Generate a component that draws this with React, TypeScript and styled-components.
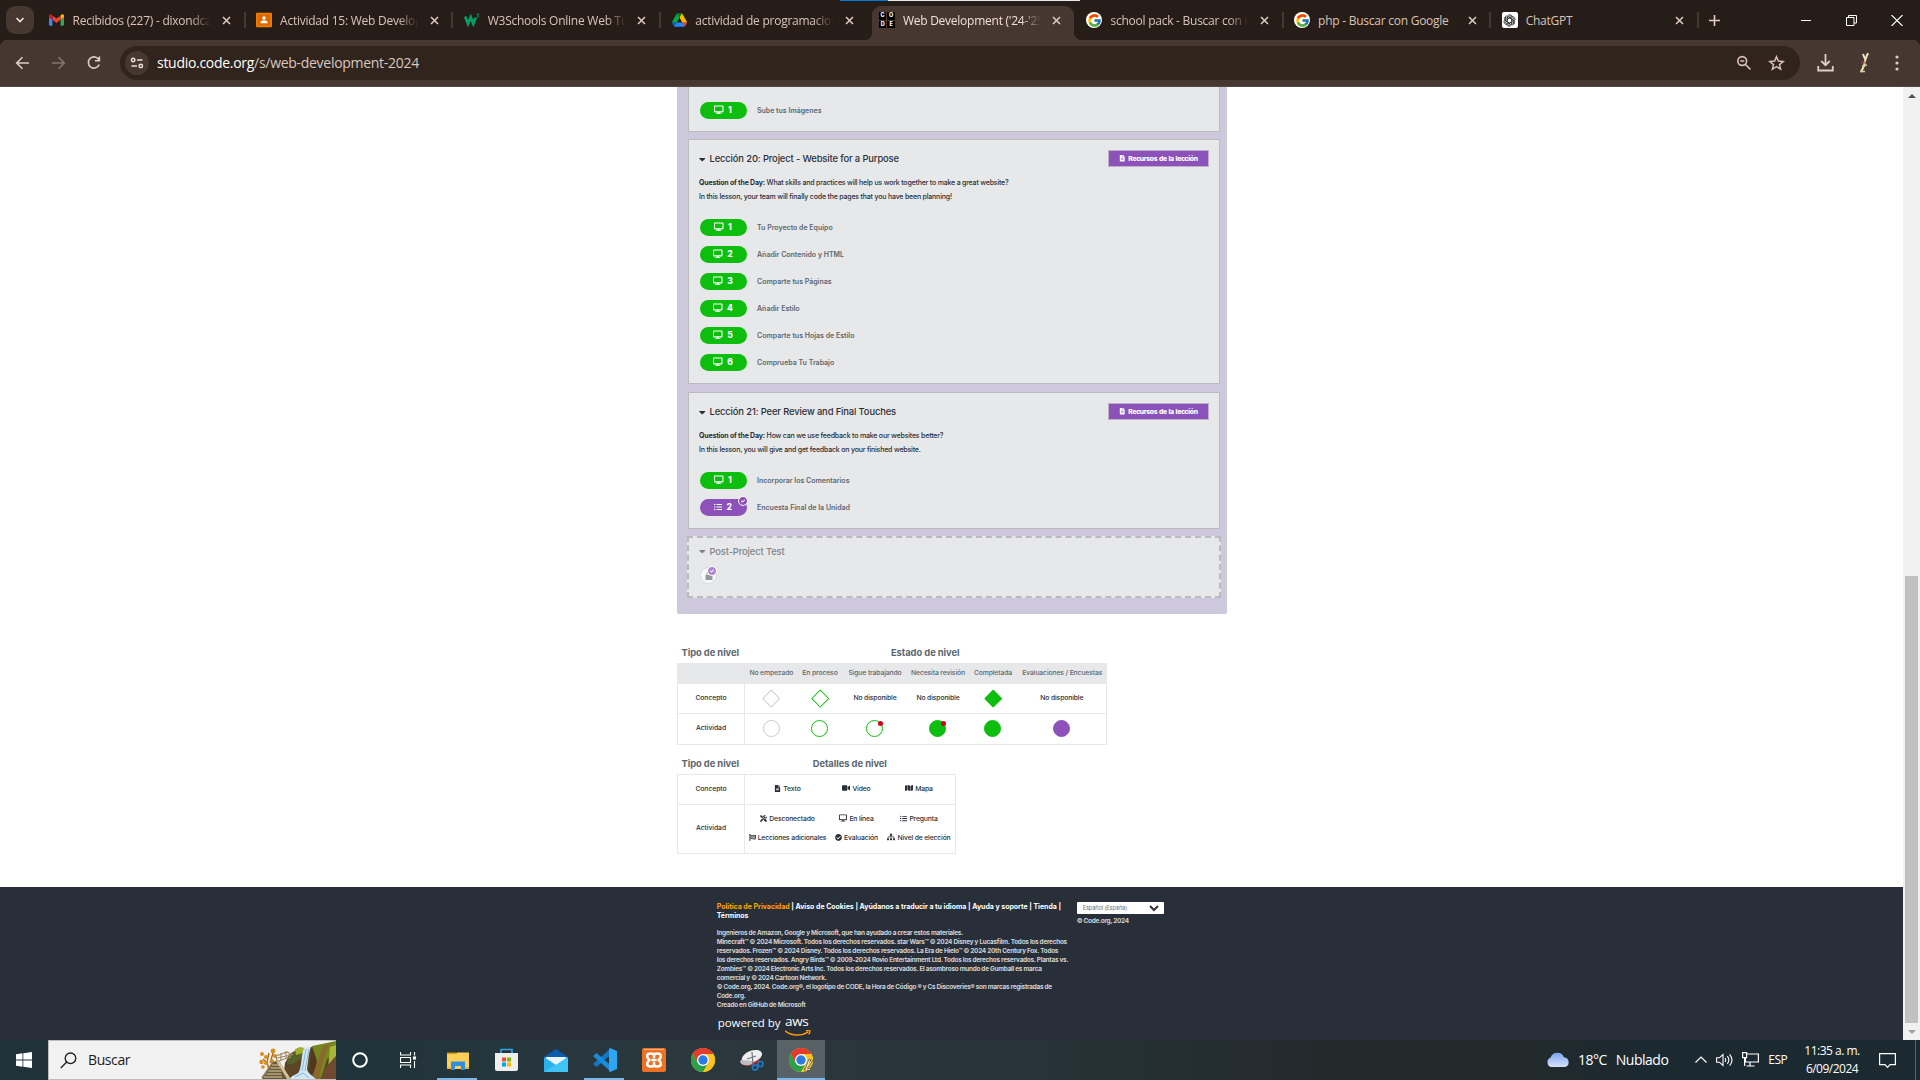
import React, { ReactNode } from 'react';
import styled, { createGlobalStyle } from 'styled-components';
import {
  FaDesktop, FaListUl, FaFileAlt, FaVideo, FaMap, FaCheckCircle, FaSitemap,
  FaFlagCheckered, FaTools, FaCaretDown, FaCheck,
} from 'react-icons/fa';
import { FcGoogle } from 'react-icons/fc';

const system = "'Open Sans', 'Noto Sans', sans-serif";
const brand = "Inter, 'Noto Sans', sans-serif";
const green = '#0ebe0e';
const purple = '#8c52ba';
const line = '#e7e8ea';

const GlobalStyle = createGlobalStyle`
  * { box-sizing: border-box; }
  html, body { margin: 0; padding: 0; overflow: hidden; }
  svg { display: block; flex: none; }
`;

const Screen = styled.div`
  width: 1920px; height: 1080px; display: flex; flex-direction: column;
  overflow: hidden; background: #fff; font-family: ${system};
`;

/* ---------- browser chrome ---------- */

const TabStrip = styled.header`
  position: relative; height: 40px; flex: none; background: #271d18;
  display: flex; align-items: flex-start; padding-left: 6px;
`;
const LoadStripe = styled.div`
  position: absolute; top: 0; left: 840px; width: 240px; height: 1px;
  background: linear-gradient(90deg, #0078d7 48px, #e8e8e8 48px);
`;
const TabSearch = styled.div`
  width: 28px; height: 28px; margin: 6px 7px 0 0; border-radius: 9px; background: #463831;
  display: flex; align-items: center; justify-content: center;
`;
const Tab = styled.div<{ $active?: boolean; $divider?: boolean }>`
  position: relative; width: 207.6px; flex: none; height: 40px; padding: 0 14px 0 7.5px;
  display: flex; align-items: center; color: ${(p) => (p.$active ? '#f1e0d9' : '#d9c3b9')};
  &::after {
    content: ''; position: absolute; right: 3px; top: 12px; width: 2px; height: 16px;
    background: ${(p) => (p.$divider ? '#463831' : 'transparent')};
  }
`;
const ActiveShape = styled.div`
  position: absolute; left: 0.5px; top: 6px; width: 202px; height: 34px;
  background: #463831; border-radius: 9px 9px 0 0;
  &::before, &::after {
    content: ''; position: absolute; bottom: 0; width: 8px; height: 8px;
  }
  &::before { left: -8px; background: radial-gradient(circle at 0 0, transparent 8px, #463831 8.5px); }
  &::after { right: -8px; background: radial-gradient(circle at 100% 0, transparent 8px, #463831 8.5px); }
`;
const Favicon = styled.div`
  position: relative; width: 16px; height: 16px; flex: none;
  display: flex; align-items: center; justify-content: center;
`;
const TabTitle = styled.div<{ $fade: boolean }>`
  position: relative; width: 138px; flex: none; margin-left: 8px; white-space: nowrap;
  font-size: 12px; line-height: 18px; letter-spacing: -0.25px; padding-top: 1px;
  mask-image: ${(p) => (p.$fade ? 'linear-gradient(90deg, #000 118px, transparent 138px)' : 'none')};
`;
const TabClose = styled.div`
  position: relative; width: 16px; height: 16px; margin-left: 8px;
  display: flex; align-items: center; justify-content: center;
`;
const NewTab = styled.div`
  width: 24px; height: 40px; margin-left: 1px; display: flex; align-items: center; justify-content: center;
`;
const WindowButtons = styled.div`
  margin-left: auto; height: 40px; display: flex; align-items: center; gap: 34px; padding-right: 17px;
`;
const Toolbar = styled.div`
  height: 47px; flex: none; display: flex; align-items: center; padding: 0 15px 1px 15px;
  border-bottom: 1px solid #514744;
  background: radial-gradient(circle at 8px 8px, #463831 8px, #271d18 8.5px) 0 0 / 8px 8px no-repeat,
    radial-gradient(circle at 0 8px, #463831 8px, #271d18 8.5px) 100% 0 / 8px 8px no-repeat, #463831;
`;
const NavButtons = styled.div`
  display: flex; align-items: center; gap: 20.5px; width: 105px;
`;
const Omnibox = styled.div`
  width: 1680px; flex: none; height: 34px; border-radius: 17px; background: #30241d; padding: 0 15px 0 5px;
  display: flex; align-items: center;
`;
const SiteInfo = styled.div`
  width: 24px; height: 24px; border-radius: 12px; background: #463831;
  display: flex; align-items: center; justify-content: center;
`;
const Url = styled.div`
  margin-left: 8px; font-size: 14px; line-height: 20px; letter-spacing: -0.29px; color: #d9c8c0;
  b { font-weight: 400; color: #fff; }
`;
const OmniActions = styled.div`
  margin-left: auto; display: flex; align-items: center; gap: 16px;
`;
const ToolbarEnd = styled.div`
  margin-left: 17px; display: flex; align-items: center; gap: 20px;
  svg:last-child { margin-left: 3px; }
`;

/* ---------- page ---------- */

const Viewport = styled.div`
  height: 953px; flex: none; display: flex; overflow: hidden;
`;
const Page = styled.main`
  width: 1903px; background: #fff; display: flex; flex-direction: column; font-family: ${brand};
`;
const Unit = styled.section`
  width: 550px; height: 527px; flex: none; margin-left: 677px; padding: 0 7px 0 11px;
  background: #cec8dc; border-radius: 0 0 2px 2px; display: flex; flex-direction: column;
`;
const Card = styled.article<{ $height: number; $cut?: boolean }>`
  height: ${(p) => p.$height}px; flex: none; margin-bottom: 7px; padding: ${(p) => (p.$cut ? '15px' : '10px')} 10px 0 10px;
  background: #e7e8ea; border: 1px solid #bbbabc; ${(p) => (p.$cut ? 'border-top: 0;' : '')}
`;
const Spacer = styled.div`height: 1px; flex: none;`;
const HiddenCard = styled.article`
  height: 62px; margin: 0 -1px; padding: 5px 10px; background: #e7e8ea; border: 2px dashed #bbbabc;
`;
const CardHead = styled.div`
  height: 17px; display: flex; align-items: center; justify-content: space-between;
`;
const Title = styled.h3<{ $muted?: boolean }>`
  margin: 0; display: flex; align-items: center; gap: 4px; white-space: nowrap;
  font-size: 9.4px; font-weight: ${(p) => (p.$muted ? 500 : 550)}; letter-spacing: -0.13px;
  color: ${(p) => (p.$muted ? '#808488' : '#292f36')}; line-height: 17px; padding-top: ${(p) => (p.$muted ? 0 : 0.5)}px;
`;
const Caret = styled(FaCaretDown)`width: 6.5px; height: 10.500px;`;
const Resources = styled.div`
  width: 101px; height: 17px; background: ${purple}; border: 1px solid #bbb2c8;
  display: flex; align-items: center; justify-content: center; gap: 2.500px;
  color: #fff; font-size: 6.800px; font-weight: 800; letter-spacing: -0.36px; word-spacing: 0.7px; white-space: nowrap;
`;
const Copy = styled.div`
  margin-top: 9px; margin-bottom: 15px; font-size: 7px; font-weight: 450; line-height: 14px;
  letter-spacing: -0.19px; color: #292f36; white-space: nowrap;
  b { font-weight: 650; }
`;
const Levels = styled.div`
  display: flex; flex-direction: column; gap: 10px; padding-left: 1px;
`;
const Level = styled.div`
  height: 17px; display: flex; align-items: center; gap: 10px;
  font-size: 7px; font-weight: 600; color: #5b6770; letter-spacing: 0; line-height: 15px;
`;
const Pill = styled.div<{ $purple?: boolean }>`
  position: relative; width: 47px; height: 17px; border-radius: 9px; background: ${(p) => (p.$purple ? purple : green)};
  color: #fff; display: flex; align-items: center; justify-content: center; gap: 4.500px; padding: 0 1px 1px 0;
  font-size: 8.500px; font-weight: 800; line-height: 14px;
`;
const LevelNumber = styled.span`padding-bottom: 1px;`;
const LevelName = styled.span`padding-bottom: 1px; white-space: nowrap;`;
const CheckBadge = styled.div<{ $faded?: boolean }>`
  position: absolute; right: -1px; top: ${(p) => (p.$faded ? -2 : -3)}px; width: 10px; height: 10px; border-radius: 5px;
  border: 1px solid #fff; background: ${(p) => (p.$faded ? '#ae86d0' : purple)}; color: #fff;
  display: flex; align-items: center; justify-content: center;
`;
const LockBubble = styled.div`
  position: relative; width: 17px; height: 17px; margin: 7px 0 0 1px; border-radius: 50%;
  border: 1px solid #d8dadc; background: #f8f8f8;
  display: flex; align-items: center; justify-content: center;
`;

/* ---------- legend ---------- */

const Legend = styled.section<{ $columns: string; $top: number }>`
  margin: ${(p) => p.$top}px 0 0 677px; display: grid; grid-template-columns: ${(p) => p.$columns};
  align-self: flex-start; flex: none;
`;
const LegendTitle = styled.div<{ $span?: number }>`
  grid-column: span ${(p) => p.$span ?? 1}; height: 20px; padding: 0 1.500px 1px 0;
  display: flex; align-items: center; justify-content: center;
  font-size: 9.400px; font-weight: 650; letter-spacing: -0.06px; color: #5b6770; white-space: nowrap;
`;
const HeadCell = styled.div`
  height: 21px; background: #e7e8ea; color: #5b6770; display: flex; align-items: center; justify-content: center;
  font-size: 6.800px; font-weight: 450; letter-spacing: -0.12px; white-space: nowrap; padding-bottom: 2px;
`;
const Cell = styled.div<{ $height: number; $label?: boolean; $last?: boolean }>`
  height: ${(p) => p.$height}px; display: flex; align-items: center; justify-content: center;
  padding-bottom: ${(p) => (p.$height > 30 ? 2 : 0)}px;
  border-bottom: 1px solid ${line}; white-space: nowrap;
  border-left: ${(p) => (p.$label ? `1px solid ${line}` : '0')};
  border-right: ${(p) => (p.$label || p.$last ? `1px solid ${line}` : '0')};
  font-size: 6.800px; font-weight: ${(p) => (p.$label ? 550 : 450)};
  letter-spacing: ${(p) => (p.$label ? '-0.05px' : '-0.12px')}; color: #292f36;
`;
const CellText = styled.span`padding-bottom: 2px;`;
const Diamond = styled.i<{ $border: string; $fill?: string }>`
  width: 12.500px; height: 12.500px; transform: rotate(45deg); border-radius: 1px;
  border: 1px solid ${(p) => p.$border}; background: ${(p) => p.$fill ?? '#fff'};
`;
const Circle = styled.i<{ $border: string; $fill?: string; $flag?: boolean }>`
  position: relative; width: 17px; height: 17px; border-radius: 50%;
  border: 1px solid ${(p) => p.$border}; background: ${(p) => p.$fill ?? '#fff'};
  &::after {
    content: ''; position: absolute; right: -1px; top: 0; width: 5px; height: 5px; border-radius: 50%;
    background: ${(p) => (p.$flag ? '#d0021b' : 'transparent')};
  }
`;
const TopRule = styled.div`grid-column: 1 / -1; height: 1px; background: ${line};`;
const DetailGrid = styled.div<{ $height: number }>`
  height: ${(p) => p.$height}px; display: grid; grid-template-columns: 77px 43px 64px; column-gap: 9px;
  row-gap: 7px; align-content: center; justify-content: center; padding-bottom: 3px;
  border-right: 1px solid ${line}; border-bottom: 1px solid ${line};
`;
const Detail = styled.div`
  height: 12px; display: flex; align-items: center; justify-content: center; gap: 2px; white-space: nowrap;
  font-size: 6.800px; font-weight: 450; letter-spacing: -0.15px; color: #292f36;
`;

/* ---------- page footer ---------- */

const Footer = styled.footer`
  height: 153px; margin-top: auto; flex: none; background: #282f38; padding: 15px 0 0 716.700px; display: flex;
`;
const FooterMain = styled.div`width: 360px;`;
const Links = styled.div`
  color: #fff; font-size: 7px; font-weight: 700; line-height: 9px; letter-spacing: -0.03px; white-space: nowrap;
  em { font-style: normal; color: #ffa400; }
`;
const Credits = styled.div`
  margin-top: 9px; color: #d0d3d6; font-size: 6.400px; font-weight: 650; line-height: 9px; letter-spacing: -0.255px;
  white-space: nowrap;
`;
const Powered = styled.div`
  margin-top: 5px; height: 24px; display: flex; align-items: flex-start; gap: 4.500px; padding-left: 1px;
  color: #fff; font: 500 11.500px/16px ${system}; letter-spacing: -0.05px;
`;
const Aws = styled.div`
  font: 400 13.500px/13px ${system}; letter-spacing: -0.3px; color: #fff;
  svg { margin-top: 2px; }
`;
const Locale = styled.div`
  display: flex; flex-direction: column; gap: 3px; color: #d0d3d6;
  font-size: 6.500px; font-weight: 650; line-height: 9px; letter-spacing: -0.33px;
`;
const Select = styled.div`
  width: 87px; height: 12px; background: #fff; border-radius: 1px; padding: 0 5px 0 6px; color: #6b7177;
  display: flex; align-items: center; justify-content: space-between; font-size: 5.600px; font-weight: 400; letter-spacing: -0.1px;
`;

/* ---------- scrollbar ---------- */

const Scrollbar = styled.div`
  width: 17px; background: #f1f1f1; display: flex; flex-direction: column; align-items: center;
`;
const Arrow = styled.div<{ $down?: boolean }>`
  height: 17px; width: 17px; display: flex; align-items: center; justify-content: center;
  &::before {
    content: ''; border: 4px solid transparent; border-top-width: ${(p) => (p.$down ? 4 : 0)}px;
    border-bottom-width: ${(p) => (p.$down ? 0 : 4)}px;
    border-top-color: ${(p) => (p.$down ? '#a3a3a3' : 'transparent')};
    border-bottom-color: ${(p) => (p.$down ? 'transparent' : '#505050')};
  }
`;
const Thumb = styled.div`margin-top: auto; width: 13px; height: 447px; background: #c1c1c1;`;

/* ---------- taskbar ---------- */

const Taskbar = styled.footer`
  height: 40px; flex: none; display: flex; align-items: stretch; color: #fff;
  background: linear-gradient(90deg, #20313a 0, #22343b 400px, #2b393e 700px, #263439 1000px, #23292b 1350px, #232a2c 1520px, #1b2930 1640px, #1b2a31 100%);
`;
const Start = styled.div`width: 48px; display: flex; align-items: center; justify-content: center;`;
const SearchBox = styled.div`
  width: 288px; background: #f2f2f2; border: 1px solid #bcbcbc; border-right: 0; display: flex; align-items: center;
  padding-left: 11px; color: #1d1d1d; font-size: 14px; letter-spacing: -0.4px;
  span { margin-left: 11px; padding-bottom: 1px; }
  svg:last-child { margin-left: auto; }
`;
const TaskItem = styled.div<{ $open?: boolean; $active?: boolean; $narrow?: boolean }>`
  width: ${(p) => (p.$narrow ? 48 : 49)}px; display: flex; align-items: center; justify-content: center; position: relative;
  &::before {
    content: ''; position: absolute; inset: 0 ${(p) => (p.$active ? '0' : '5px')} 0 ${(p) => (p.$active ? '1px' : '4px')};
    background: ${(p) => (p.$active ? 'rgba(255,255,255,0.22)' : 'transparent')};
    border-bottom: ${(p) => (p.$open || p.$active ? '2px solid #76b9ed' : '0')};
  }
  svg { position: relative; }
`;
const Weather = styled.div`
  margin-left: auto; display: flex; align-items: center; font-size: 14px; letter-spacing: -0.5px; padding-bottom: 1px;
  span { margin-left: 8px; }
  span + span { margin-left: 9px; }
`;
const Tray = styled.div`
  display: flex; align-items: center; margin-left: 27px; gap: 9px;
  font-size: 12px; letter-spacing: -0.6px; padding-bottom: 1px;
`;
const Clock = styled.div`
  width: 60px; margin-left: 15px; padding-top: 1.500px; font-size: 12px; line-height: 18px; letter-spacing: -0.51px; text-align: center;
`;
const Notice = styled.div`
  margin: 0 4px 0 16px; width: 38px; display: flex; align-items: center; padding-left: 1px;
  border-right: 1px solid #5d696e;
`;

/* ---------- drawings ---------- */

const CloseMark = () => (
  <svg width="9" height="9" viewBox="0 0 9 9" stroke="#e0cdc4" strokeWidth="1.5"><path d="M1 1l7 7M8 1L1 8" /></svg>
);
const Gmail = () => (
  <svg width="15" height="12" viewBox="52 42 88 66">
    <path fill="#4285f4" d="M58 108h14V74L52 59v43c0 3.32 2.69 6 6 6" />
    <path fill="#34a853" d="M120 108h14c3.32 0 6-2.69 6-6V59l-20 15" />
    <path fill="#fbbc04" d="M120 48v26l20-15v-8c0-7.42-8.47-11.65-14.4-7.2" />
    <path fill="#ea4335" d="M72 74V48l24 18 24-18v26L96 92" />
    <path fill="#c5221f" d="M52 51v8l20 15V48l-5.6-4.2c-5.94-4.45-14.4-.22-14.4 7.2" />
  </svg>
);
const Classroom = () => (
  <svg width="16" height="16" viewBox="0 0 16 16">
    <rect y=".7" width="16" height="14.6" rx="1" fill="#f57c00" /><rect x="1.6" y="2.3" width="12.8" height="11.4" fill="#d96a00" />
    <circle cx="8" cy="6" r="1.7" fill="#fff" /><path d="M4.3 11.2c0-2 2-2.900 3.700-2.900s3.700.9 3.700 2.900z" fill="#fff" />
  </svg>
);
const W3 = () => (
  <svg width="16" height="16" viewBox="0 0 16 16">
    <path d="M1 4.500l3 7.200 2.700-6.400 2.600 6.400 2.400-6" fill="none" stroke="#04a067" strokeWidth="2.700" />
    <path d="M12.600 2h2.200l-1.200 1.500c1.600 0 1.600 2.200-.9 1.800" fill="none" stroke="#04a067" strokeWidth=".9" />
  </svg>
);
const Drive = () => (
  <svg width="15" height="14" viewBox="0 0 87.3 78">
    <path fill="#0066da" d="m6.6 66.85 3.85 6.65c.8 1.4 1.95 2.5 3.3 3.3l13.75-23.8h-27.5c0 1.55.4 3.1 1.2 4.5z" />
    <path fill="#00ac47" d="m43.65 25-13.75-23.8c-1.35.8-2.5 1.9-3.3 3.3l-25.4 44a9.06 9.06 0 0 0-1.2 4.5h27.5z" />
    <path fill="#ea4335" d="m73.55 76.8c1.35-.8 2.5-1.9 3.3-3.3l1.6-2.75 7.65-13.25c.8-1.4 1.2-2.95 1.2-4.5h-27.502l5.852 11.5z" />
    <path fill="#00832d" d="m43.65 25 13.75-23.8c-1.35-.8-2.9-1.2-4.5-1.2h-18.5c-1.6 0-3.15.45-4.5 1.2z" />
    <path fill="#2684fc" d="m59.8 53h-32.3l-13.75 23.8c1.35.8 2.9 1.2 4.5 1.2h50.8c1.6 0 3.15-.45 4.5-1.2z" />
    <path fill="#ffba00" d="m73.4 26.5-12.7-22c-.8-1.4-1.95-2.5-3.3-3.3l-13.75 23.8 16.15 28h27.45c0-1.55-.4-3.1-1.2-4.5z" />
  </svg>
);
const CodeTiles = styled.div`
  width: 16px; height: 16px; display: grid; grid-template-columns: 7.500px 7.500px; grid-auto-rows: 7.500px; gap: 1px;
  span {
    background: #000; color: #fff; font: 800 5.500px/7.500px ${brand}; text-align: center;
  }
`;
const GoogleDisc = styled.div`
  width: 16px; height: 16px; border-radius: 50%; background: #fff; display: flex; align-items: center; justify-content: center;
`;
const GptTile = styled.div`
  width: 16px; height: 16px; border-radius: 2px; background: #fff; display: flex; align-items: center; justify-content: center;
`;
const Knot = () => (
  <svg width="13" height="13" viewBox="-12 -12 24 24" fill="none" stroke="#333" strokeWidth="1.6">
    {[0, 60, 120, 180, 240, 300].map((a) => (
      <path key={a} transform={`rotate(${a})`} d="M-4.2 2.4V-5.6C-4.2-11 3-12.4 5.2-7.6M-4.2-2.6L2.8-6.6 9-3" />
    ))}
  </svg>
);
const OpenLock = () => (
  <svg width="8" height="9" viewBox="0 0 8 9">
    <path d="M2 4.200V2.600C2 .4 5.200.3 5.400 2.200" fill="none" stroke="#b3a98e" strokeWidth="1.100" />
    <rect x=".5" y="4" width="7" height="5" rx=".6" fill="#949ca2" />
  </svg>
);
const Chrome = ({ size, badge }: { size: number; badge?: boolean }) => (
  <svg width={size} height={size} viewBox="0 0 48 48">
    <circle cx="24" cy="24" r="24" fill="#fbc116" />
    <path d="M24 12h20.800A24 24 0 0 0 3.200 12l10.400 18L24 24z" fill="#e33b2e" />
    <path d="M3.200 12A24 24 0 0 0 24 48l10.400-18L24 24 13.600 30z" fill="#2aa148" />
    <path d="M44.800 12H24v12l10.400 6L24 48A24 24 0 0 0 44.800 12z" fill="#fcc31e" />
    <circle cx="24" cy="24" r="12" fill="#fff" /><circle cx="24" cy="24" r="9.400" fill="#2c7be5" />
    {badge && (
      <g fill="none" strokeLinecap="round">
        <path d="M41 24l-4 11-3 11M45 26l-7 10M32 42l9 1" stroke="#5f533a" strokeWidth="5" />
        <path d="M41 24l-4 11-3 11M45 26l-7 10M32 42l9 1" stroke="#efe2b8" strokeWidth="2.400" />
      </g>
    )}
  </svg>
);
const Waterfall = () => (
  <svg width="77" height="38" viewBox="0 0 77 38">
    <path d="M24 38l2-16 5-9 9-4 12-3L77 1v37z" fill="#5a4526" />
    <path d="M29 14l8-5 9-1-2 8-8 6-8 2z" fill="#56622a" />
    <path d="M36 8l5-2 5 1-2 5-7 2z" fill="#a3b02e" />
    <path d="M52 7l10-3-2 16-8 18h-4l3-14z" fill="#54371f" />
    <path d="M53 5l24-5v13l-9 5-6 20h-8l4-18z" fill="#77871f" />
    <path d="M64 5l6-2-6 17-4 18h-8l7-18z" fill="#8a6a2c" />
    <path d="M71 6l6-2v12l-8 12z" fill="#a8b636" />
    <path d="M77 15v23H61l6-12z" fill="#704a2e" />
    <path d="M45 7l7-2-2 8-2 15c1 5 6 7 9 10H31c1-4 7-4 9-7 3-8 2-16 5-24z" fill="#cfe8f3" />
    <path d="M47 8l-4 22M50 8l-4 22M36 36l8-4 6 5" stroke="#86b8d3" strokeWidth="1" fill="none" />
    <path d="M10 12l-2 9 2 8M15 9l-4 13M4 18l5 5" stroke="#a5640f" strokeWidth="1.300" fill="none" />
    <g fill="#d98d1c">
      <circle cx="3" cy="13" r="2" /><circle cx="7" cy="16" r="2" /><circle cx="14" cy="10" r="2.400" /><circle cx="16" cy="15" r="2" />
      <circle cx="2.500" cy="21" r="2.200" /><circle cx="7" cy="22" r="2" /><circle cx="13" cy="20" r="2" /><circle cx="4" cy="26" r="1.800" />
    </g>
    <path d="M3 38l11-17 6-2 9 19z" fill="#6b5838" />
    <path d="M5 36h18M7.500 33h15M9.500 30h13M11.500 27h10M13 24h7" stroke="#b7a783" strokeWidth="1.500" />
    <path d="M18 19l12 19" stroke="#d5c19a" strokeWidth="3" /><path d="M14 21L3 37" stroke="#8d7854" strokeWidth="1.500" />
    <path d="M18 21l-1-6 11-4 6 3M18 17l14-3M20 20l11-4M22 12v8M27 10v8M31 12v5" stroke="#a48d66" strokeWidth="1.200" fill="none" />
  </svg>
);

/* ---------- content ---------- */

const tabs: { title: string; icon: ReactNode; active?: boolean; divider?: boolean; short?: boolean }[] = [
  { title: 'Recibidos (227) - dixondca', icon: <Gmail />, divider: true },
  { title: 'Actividad 15: Web Develop', icon: <Classroom />, divider: true },
  { title: 'W3Schools Online Web Tu', icon: <W3 />, divider: true },
  { title: 'actividad de programacion', icon: <Drive /> },
  { title: "Web Development ('24-'25", icon: <CodeTiles><span>C</span><span>O</span><span>D</span><span>E</span></CodeTiles>, active: true },
  { title: 'school pack - Buscar con G', icon: <GoogleDisc><FcGoogle size={15} /></GoogleDisc>, divider: true },
  { title: 'php - Buscar con Google', icon: <GoogleDisc><FcGoogle size={15} /></GoogleDisc>, divider: true, short: true },
  { title: 'ChatGPT', icon: <GptTile><Knot /></GptTile>, divider: true, short: true },
];

const LevelRow = ({ n, name, survey }: { n: number; name: string; survey?: boolean }) => (
  <Level>
    <Pill $purple={survey}>
      {survey ? <FaListUl size={8} /> : <FaDesktop size={9.5} />}
      <LevelNumber>{n}</LevelNumber>
      {survey && <CheckBadge><FaCheck size={4} /></CheckBadge>}
    </Pill>
    <LevelName>{name}</LevelName>
  </Level>
);

const Lesson = ({ title, question, summary, height, children }: {
  title: string; question: string; summary: string; height: number; children: ReactNode;
}) => (
  <Card $height={height}>
    <CardHead>
      <Title><Caret />{title}</Title>
      <Resources><FaFileAlt size={6.5} />Recursos de la lección</Resources>
    </CardHead>
    <Copy>
      <div><b>Question of the Day:</b> {question}</div>
      <div>{summary}</div>
    </Copy>
    <Levels>{children}</Levels>
  </Card>
);

const none = <CellText>No disponible</CellText>;
const statusColumns = '68px 52.7px 44.6px 65.4px 60.6px 49.4px 89.3px';
const statusNames = ['', 'No empezado', 'En proceso', 'Sigue trabajando', 'Necesita revisión', 'Completada', 'Evaluaciones / Encuestas'];

export default function App() {
  return (
    <Screen>
      <GlobalStyle />
      <TabStrip>
        <LoadStripe />
        <TabSearch>
          <svg width="10" height="8" viewBox="0 0 10 8" fill="none" stroke="#f1e0d9" strokeWidth="1.7"><path d="M1.5 2L5 5.500 8.500 2" /></svg>
        </TabSearch>
        {tabs.map((t) => (
          <Tab key={t.title} $active={t.active} $divider={t.divider}>
            {t.active && <ActiveShape />}
            <Favicon>{t.icon}</Favicon>
            <TabTitle $fade={!t.short}>{t.title}</TabTitle>
            <TabClose><CloseMark /></TabClose>
          </Tab>
        ))}
        <NewTab>
          <svg width="11" height="11" viewBox="0 0 11 11" stroke="#e0cdc4" strokeWidth="1.6"><path d="M5.500 0v11M0 5.500h11" /></svg>
        </NewTab>
        <WindowButtons>
          <svg width="11" height="11" viewBox="0 0 11 11" stroke="#fff"><path d="M0 5.500h10" /></svg>
          <svg width="11" height="11" viewBox="0 0 11 11" stroke="#fff" fill="none"><path d="M.5 2.500h7.500v8H.5zM2.500 2.500v-2h8v7.500H8" /></svg>
          <svg width="12" height="11" viewBox="0 0 12 11" stroke="#fff" strokeWidth="1.1"><path d="M.5 0l11 11M11.500 0L.5 11" /></svg>
        </WindowButtons>
      </TabStrip>

      <Toolbar>
        <NavButtons>
          <svg width="15" height="14" viewBox="0 0 15 14" fill="none" stroke="#e0cdc4" strokeWidth="1.6"><path d="M14 7H2M7.500 1.200L1.700 7l5.800 5.800" /></svg>
          <svg width="15" height="14" viewBox="0 0 15 14" fill="none" stroke="#84766f" strokeWidth="1.600"><path d="M1 7h12M7.500 1.200L13.300 7l-5.800 5.800" /></svg>
          <svg width="16" height="16" viewBox="0 0 16 16" fill="none" stroke="#e0cdc4" strokeWidth="1.600"><path d="M13.200 9.500A5.600 5.600 0 1 1 13 5M13.400 1.500v4.300H9" /></svg>
        </NavButtons>
        <Omnibox>
          <SiteInfo>
            <svg width="14" height="12" viewBox="0 0 14 12" fill="none" stroke="#f1e0d9" strokeWidth="1.500">
              <circle cx="3.200" cy="3" r="1.700" /><path d="M7 3h5.500M1.500 9H7" /><circle cx="10.800" cy="9" r="1.700" />
            </svg>
          </SiteInfo>
          <Url><b>studio.code.org</b>/s/web-development-2024</Url>
          <OmniActions>
            <svg width="16" height="16" viewBox="0 0 16 16" fill="none" stroke="#d9c3b9" strokeWidth="1.600"><circle cx="6.200" cy="6" r="4.400" /><path d="M9.500 9.500l5 5M4.200 6h4" /></svg>
            <svg width="17" height="16" viewBox="0 0 24 24" fill="none" stroke="#d9c3b9" strokeWidth="2.200"><path d="M12 2.500l2.800 6.600 7.200.6-5.500 4.700 1.700 7L12 17.600l-6.200 3.800 1.700-7L2 9.700l7.200-.6z" /></svg>
          </OmniActions>
        </Omnibox>
        <ToolbarEnd>
          <svg width="17" height="18" viewBox="0 0 17 18" fill="none" stroke="#e0cdc4" strokeWidth="1.800"><path d="M8.500 0v11M4.300 7l4.200 4.200L12.700 7M1.200 12v4.500h14.600V12" /></svg>
          <svg width="18" height="20" viewBox="0 0 18 20" fill="none">
            <path d="M9 1l2 5M14 0l-2.500 6-1.500 7-3 6" stroke="#f2e6bf" strokeWidth="2" />
            <path d="M6 18.500h5M8 13l5-1" stroke="#d9cda5" strokeWidth="1.500" />
            <path d="M9 8l-2 2M11 8v3" stroke="#a4533d" strokeWidth="1" />
          </svg>
          <svg width="4" height="16" viewBox="0 0 4 16" fill="#e0cdc4"><circle cx="2" cy="2" r="1.600" /><circle cx="2" cy="8" r="1.600" /><circle cx="2" cy="14" r="1.600" /></svg>
        </ToolbarEnd>
      </Toolbar>

      <Viewport>
        <Page>
          <Unit>
            <Card $height={45} $cut>
              <Levels><LevelRow n={1} name="Sube tus Imágenes" /></Levels>
            </Card>
            <Lesson
              height={245}
              title="Lección 20: Project - Website for a Purpose"
              question="What skills and practices will help us work together to make a great website?"
              summary="In this lesson, your team will finally code the pages that you have been planning!"
            >
              <LevelRow n={1} name="Tu Proyecto de Equipo" />
              <LevelRow n={2} name="Añadir Contenido y HTML" />
              <LevelRow n={3} name="Comparte tus Páginas" />
              <LevelRow n={4} name="Añadir Estilo" />
              <LevelRow n={5} name="Comparte tus Hojas de Estilo" />
              <LevelRow n={6} name="Comprueba Tu Trabajo" />
            </Lesson>
            <Spacer />
            <Lesson
              height={137}
              title="Lección 21: Peer Review and Final Touches"
              question="How can we use feedback to make our websites better?"
              summary="In this lesson, you will give and get feedback on your finished website."
            >
              <LevelRow n={1} name="Incorporar los Comentarios" />
              <LevelRow n={2} name="Encuesta Final de la Unidad" survey />
            </Lesson>
            <HiddenCard>
              <Title $muted><Caret />Post-Project Test</Title>
              <LockBubble><OpenLock /><CheckBadge $faded><FaCheck size={4} /></CheckBadge></LockBubble>
            </HiddenCard>
          </Unit>

          <Legend $columns={statusColumns} $top={29}>
            <LegendTitle>Tipo de nivel</LegendTitle>
            <LegendTitle $span={6}>Estado de nivel</LegendTitle>
            {statusNames.map((h) => <HeadCell key={h}>{h}</HeadCell>)}
            <Cell $height={30} $label><CellText>Concepto</CellText></Cell>
            <Cell $height={30}><Diamond $border="#c6cacd" /></Cell>
            <Cell $height={30}><Diamond $border={green} /></Cell>
            <Cell $height={30}>{none}</Cell>
            <Cell $height={30}>{none}</Cell>
            <Cell $height={30}><Diamond $border={green} $fill={green} /></Cell>
            <Cell $height={30} $last>{none}</Cell>
            <Cell $height={31} $label><CellText>Actividad</CellText></Cell>
            <Cell $height={31}><Circle $border="#c6cacd" /></Cell>
            <Cell $height={31}><Circle $border={green} /></Cell>
            <Cell $height={31}><Circle $border={green} $flag /></Cell>
            <Cell $height={31}><Circle $border={green} $fill={green} $flag /></Cell>
            <Cell $height={31}><Circle $border={green} $fill={green} /></Cell>
            <Cell $height={31} $last><Circle $border={purple} $fill={purple} /></Cell>
          </Legend>

          <Legend $columns="68px 211px" $top={9}>
            <LegendTitle>Tipo de nivel</LegendTitle>
            <LegendTitle>Detalles de nivel</LegendTitle>
            <TopRule />
            <Cell $height={30} $label><CellText>Concepto</CellText></Cell>
            <DetailGrid $height={30}>
              <Detail><FaFileAlt size={7} />Texto</Detail>
              <Detail><FaVideo size={8} />Vídeo</Detail>
              <Detail><FaMap size={8} />Mapa</Detail>
            </DetailGrid>
            <Cell $height={49} $label><CellText>Actividad</CellText></Cell>
            <DetailGrid $height={49}>
              <Detail><FaTools size={7} />Desconectado</Detail>
              <Detail><FaDesktop size={8} />En línea</Detail>
              <Detail><FaListUl size={7} />Pregunta</Detail>
              <Detail><FaFlagCheckered size={7} />Lecciones adicionales</Detail>
              <Detail><FaCheckCircle size={7} />Evaluación</Detail>
              <Detail><FaSitemap size={8} />Nivel de elección</Detail>
            </DetailGrid>
          </Legend>

          <Footer>
            <FooterMain>
              <Links>
                <em>Política de Privacidad</em> | Aviso de Cookies | Ayúdanos a traducir a tu idioma | Ayuda y soporte | Tienda |
                <br />Términos
              </Links>
              <Credits>
                <div>Ingenieros de Amazon, Google y Microsoft, que han ayudado a crear estos materiales.</div>
                <div>Minecraft™ © 2024 Microsoft. Todos los derechos reservados. star Wars™ © 2024 Disney y Lucasfilm. Todos los derechos</div>
                <div>reservados. Frozen™ © 2024 Disney. Todos los derechos reservados. La Era de Hielo™ © 2024 20th Century Fox. Todos</div>
                <div>los derechos reservados. Angry Birds™ © 2009-2024 Rovio Entertainment Ltd. Todos los derechos reservados. Plantas vs.</div>
                <div>Zombies™ © 2024 Electronic Arts Inc. Todos los derechos reservados. El asombroso mundo de Gumball es marca</div>
                <div>comercial y © 2024 Cartoon Network.</div>
                <div>© Code.org, 2024. Code.org®, el logotipo de CODE, la Hora de Código ® y Cs Discoveries® son marcas registradas de</div>
                <div>Code.org.</div>
                <div>Creado en GitHub de Microsoft</div>
              </Credits>
              <Powered>
                powered by
                <Aws>
                  aws
                  <svg width="26" height="7" viewBox="0 0 26 7" fill="none" stroke="#ff9900" strokeWidth="1.400"><path d="M0 .8c7 5.400 17 5.400 23 1.400M21 .8c2-.6 4-.4 4 .4s-.4 2-1.400 3.200" /></svg>
                </Aws>
              </Powered>
            </FooterMain>
            <Locale>
              <Select>
                Español (España)
                <svg width="10" height="7" viewBox="0 0 10 7" fill="none" stroke="#333" strokeWidth="2"><path d="M1 1l4 4 4-4" /></svg>
              </Select>
              © Code.org, 2024
            </Locale>
          </Footer>
        </Page>
        <Scrollbar><Arrow /><Thumb /><Arrow $down /></Scrollbar>
      </Viewport>

      <Taskbar>
        <Start>
          <svg width="16" height="16" viewBox="0 0 16 16" fill="#fff"><path d="M0 2.200L6.500 1.300v6.300H0zM7.300 1.200L16 0v7.600H7.300zM0 8.400h6.500v6.300L0 13.800zM7.300 8.400H16V16l-8.700-1.200z" /></svg>
        </Start>
        <SearchBox>
          <svg width="17" height="17" viewBox="0 0 17 17" fill="none" stroke="#1d1d1d" strokeWidth="1.300"><circle cx="10.500" cy="6.300" r="5.300" /><path d="M6.700 10L.8 16" /></svg>
          <span>Buscar</span>
          <Waterfall />
        </SearchBox>
        <TaskItem $narrow><svg width="18" height="18" viewBox="0 0 18 18" fill="none" stroke="#fff" strokeWidth="2"><circle cx="9" cy="9" r="6.800" /></svg></TaskItem>
        <TaskItem>
          <svg width="17" height="16" viewBox="0 0 17 16" fill="none" stroke="#fff" strokeWidth="1.100"><path d="M.5 0v3h10V0M.5 16v-3h10v3M.5 5.500h10v5H.5zM14.500 0v3.500M14.500 9v7" /><rect x="13.500" y="5" width="2" height="2" fill="#fff" /></svg>
        </TaskItem>
        <TaskItem $open>
          <svg width="22" height="19" viewBox="0 0 22 19"><path d="M0 1.500h9l1.500 2H0z" fill="#d9930b" /><path d="M0 3h9l1-1.500h12V18H0z" fill="#fbcf58" /><path d="M4 10.500h14V19h-4v-4H8v4H4z" fill="#2f8fdc" /><path d="M0 16h4v2H0zM18 16h4v2h-4z" fill="#f0b73a" /></svg>
        </TaskItem>
        <TaskItem>
          <svg width="23" height="24" viewBox="0 0 23 24"><path d="M6 6V1.500h11V6" fill="none" stroke="#2aa9e8" strokeWidth="1.600" /><path d="M0 5h23v16a2 2 0 0 1-2 2H2a2 2 0 0 1-2-2z" fill="#eee" /><path d="M7 9.500h4v4H7z" fill="#f25022" /><path d="M12 9.500h4v4h-4z" fill="#7fba00" /><path d="M7 14.500h4v4H7z" fill="#00a4ef" /><path d="M12 14.500h4v4h-4z" fill="#ffb900" /></svg>
        </TaskItem>
        <TaskItem>
          <svg width="24" height="23" viewBox="0 0 24 23"><path d="M0 8l12-8 12 8v4H0z" fill="#0a5cae" /><path d="M2 8h20v8H2z" fill="#eaf6fd" /><path d="M0 8l12 8 12-8v15H0z" fill="#2bb0ee" /><path d="M0 23L24 8v15z" fill="#4fd0fa" opacity=".6" /></svg>
        </TaskItem>
        <TaskItem $open>
          <svg width="24" height="24" viewBox="0 0 24 24"><path d="M17 1v6.500L3.500 19 0 16z" fill="#1277c4" /><path d="M17 23v-6.500L3.500 5 0 8z" fill="#1b8ad9" /><path d="M17 0l7 3v18l-7 3-1-1V1z" fill="#2fa6f2" /></svg>
        </TaskItem>
        <TaskItem>
          <svg width="24" height="24" viewBox="0 0 24 24"><rect width="24" height="24" rx="2" fill="#ee7023" /><path d="M2 1.500h20" stroke="#f8b48a" /><path d="M12 9V7.500C12 6 11 5.500 9 5.500S5.200 6 5.200 8 6 11 7.500 12C6 13 5.200 14 5.200 16S7 18.500 9 18.500s3-.5 3-2V15v1.500c0 1.500 1 2 3 2s3.800-.5 3.800-2.500-.8-3-2.300-4c1.500-1 2.300-2 2.300-4S17 5.500 15 5.500s-3 .5-3 2zM9.500 12h5" fill="none" stroke="#fff" strokeWidth="2.600" strokeLinejoin="round" /></svg>
        </TaskItem>
        <TaskItem><Chrome size={24} /></TaskItem>
        <TaskItem>
          <svg width="24" height="24" viewBox="0 0 24 24"><ellipse cx="10.500" cy="11" rx="10.500" ry="6.500" transform="rotate(-20 10.500 11)" fill="#b02c34" /><ellipse cx="12" cy="8.500" rx="10.500" ry="5.800" transform="rotate(-20 12 8.500)" fill="#eceef0" /><path d="M0 14c2 4 8 4 12 2l1-3-12-1z" fill="#b9bdc1" /><path d="M12 4l1 12M7 11l9-3" stroke="#6f767c" strokeWidth="1.200" /><circle cx="15" cy="19.500" r="2.600" fill="none" stroke="#1e78c2" strokeWidth="1.700" /><circle cx="20.500" cy="16" r="2.500" fill="none" stroke="#1e78c2" strokeWidth="1.700" /></svg>
        </TaskItem>
        <TaskItem $active><Chrome size={24} badge /></TaskItem>

        <Weather>
          <svg width="24" height="17" viewBox="0 0 24 17"><defs><linearGradient id="cloud" x1="0" y1="0" x2="0" y2="1"><stop offset="0" stopColor="#7ba4ec" /><stop offset="1" stopColor="#d5e3fb" /></linearGradient></defs><path d="M5 16a5 5 0 0 1-.4-9.400A7.200 7.200 0 0 1 18 6.200 5 5 0 0 1 19 16z" fill="url(#cloud)" /></svg>
          <span>18°C</span><span>Nublado</span>
        </Weather>
        <Tray>
          <svg width="12" height="7" viewBox="0 0 12 7" fill="none" stroke="#fff" strokeWidth="1.200"><path d="M.5 6.500L6 1l5.500 5.500" /></svg>
          <svg width="17" height="14" viewBox="0 0 17 14" fill="none" stroke="#fff" strokeWidth="1.100"><path d="M.6 4.800h2.800L7 1.500v11L3.400 9.200H.6zM9 5c1 1.300 1 2.700 0 4M11.300 3.200c2 2.400 2 5.200 0 7.600M13.600 1.300c3 3.500 3 7.900 0 11.400" /></svg>
          <svg width="17" height="15" viewBox="0 0 17 15" fill="none" stroke="#fff" strokeWidth="1.200"><path d="M5 2h11.400v8H3.500V6M.6.600h4v5h-4zM8 10v3.500M4.500 14h8M2.600 5.500V14" /></svg>
          <span>ESP</span>
        </Tray>
        <Clock>11:35 a. m.<br />6/09/2024</Clock>
        <Notice>
          <svg width="17" height="17" viewBox="0 0 17 17" fill="none" stroke="#fff" strokeWidth="1.200"><path d="M.6 1.600h15.800v11H11l-2.500 2.800L6 12.600H.6z" /></svg>
        </Notice>
      </Taskbar>
    </Screen>
  );
}
